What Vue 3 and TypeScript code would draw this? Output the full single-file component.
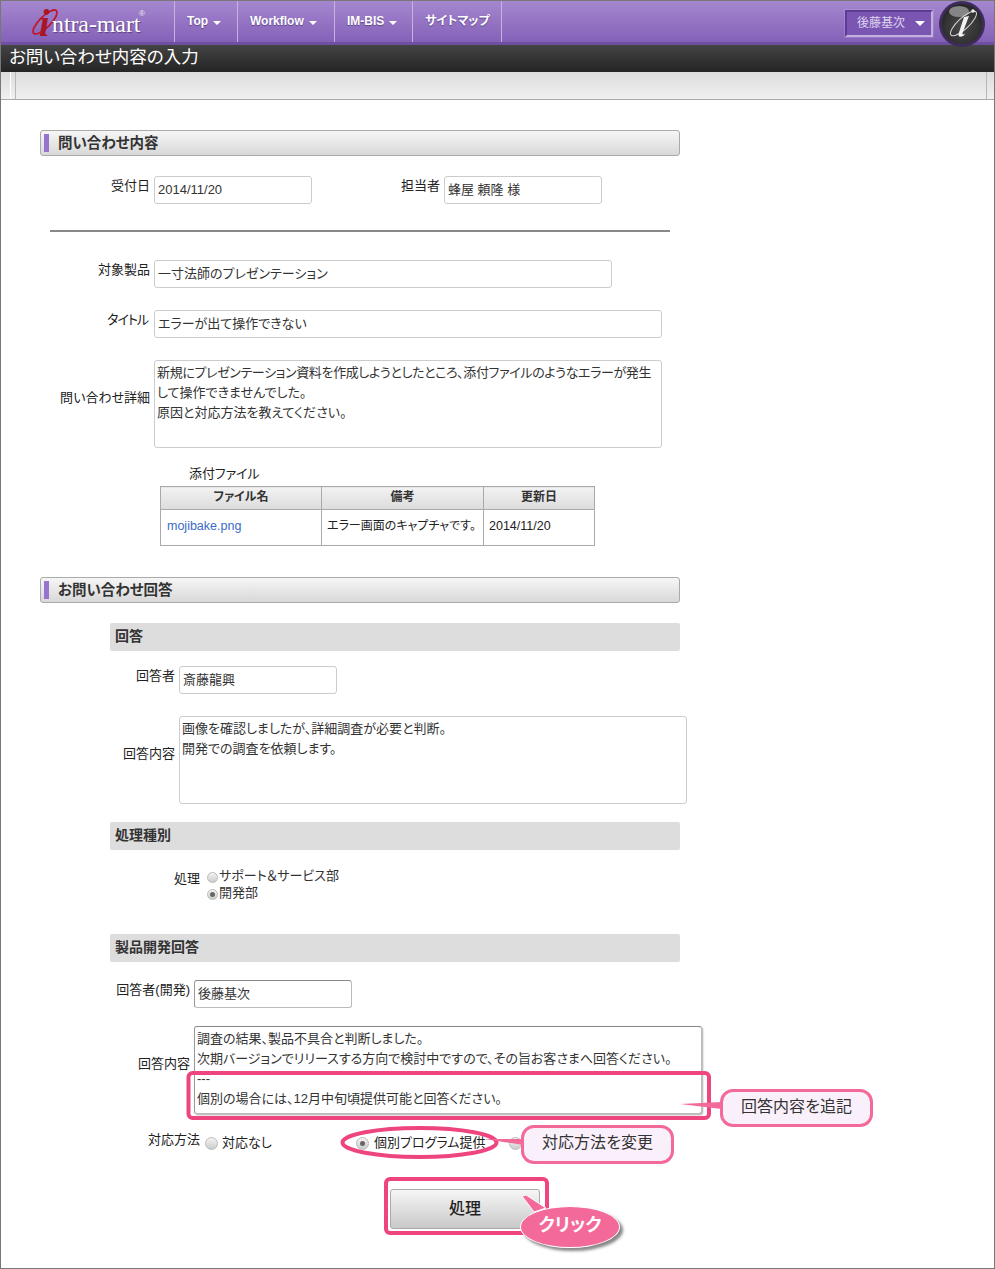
<template>
  <div class="page">
    <header class="topbar">
      <div class="logo">
        <svg class="logo-mark" width="34" height="32" viewBox="0 0 34 32">
          <ellipse cx="16" cy="16" rx="5.5" ry="16" transform="rotate(45 16 16)" fill="none" stroke="#c2182b" stroke-width="1.8" />
        </svg>
        <span class="logo-i">i</span><span class="logo-text">ntra-mart</span><sup class="logo-r">®</sup>
      </div>
      <nav class="menu">
        <a v-for="item in menu" :key="item.label" class="menu-item" :style="{ width: item.width + 'px' }">
          {{ item.label }}<i v-if="item.caret" class="caret"></i>
        </a>
      </nav>
      <div class="user-box">後藤基次<i class="user-caret"></i></div>
      <div class="info-ball">
        <svg width="46" height="46" viewBox="0 0 46 46">
          <defs>
            <radialGradient id="ballFill" cx="50%" cy="55%" r="60%">
              <stop offset="0" stop-color="#4a4a4a" />
              <stop offset="0.7" stop-color="#333" />
              <stop offset="1" stop-color="#1e1e1e" />
            </radialGradient>
          </defs>
          <circle cx="23" cy="23" r="23" fill="#3d2b58" />
          <circle cx="23" cy="23" r="20" fill="url(#ballFill)" />
          <ellipse cx="20" cy="10.5" rx="10" ry="5.5" fill="#858585" />
          <ellipse cx="24.5" cy="22.5" rx="5.5" ry="17" transform="rotate(47 24.5 22.5)" fill="none" stroke="#d8d8d8" stroke-width="1" />
          <path d="M25 16 L30 15 L23.5 32 Q23 34.5 26 32.5 L25 34.5 Q19 37.5 19.5 33 Z" fill="#f2f2f2" />
          <circle cx="34" cy="10" r="1.8" fill="#eee" />
        </svg>
      </div>
    </header>
    <div class="titlebar">お問い合わせ内容の入力</div>
    <div class="toolbar"><i class="tool-line"></i></div>

    <h2 class="section first">問い合わせ内容</h2>

    <div class="row r-176 with-a">
      <label class="label a">受付日</label>
      <div class="field w158">2014/11/20</div>
      <label class="label second">担当者</label>
      <div class="field w158">蜂屋 頼隆 様</div>
    </div>
    <hr class="divider" />
    <div class="row r-260">
      <label class="label a">対象製品</label>
      <div class="field w458">一寸法師のプレゼンテーション</div>
    </div>
    <div class="row r-310">
      <label class="label a narrow">タイトル</label>
      <div class="field w508">エラーが出て操作できない</div>
    </div>
    <div class="row r-310">
      <label class="label a mid">問い合わせ詳細</label>
      <div class="field area w508"><span class="tight">新規にプレゼンテーション資料を作成しようとしたところ、添付ファイルのようなエラーが発生</span><br />して操作できませんでした。<br />原因と対応方法を教えてください。</div>
    </div>

    <div class="attach-label">添付ファイル</div>
    <table class="files">
      <thead>
        <tr>
          <th class="c1">ファイル名</th>
          <th class="c2">備考</th>
          <th class="c3">更新日</th>
        </tr>
      </thead>
      <tbody>
        <tr>
          <td><a class="file-link">mojibake.png</a></td>
          <td>エラー画面のキャプチャです。</td>
          <td class="latin">2014/11/20</td>
        </tr>
      </tbody>
    </table>

    <h2 class="section s2">お問い合わせ回答</h2>

    <h3 class="sub s-623">回答</h3>
    <div class="row r-666">
      <label class="label b">回答者</label>
      <div class="field w158">斎藤龍興</div>
    </div>
    <div class="row r-716">
      <label class="label b mid">回答内容</label>
      <div class="field area w508">画像を確認しましたが、詳細調査が必要と判断。<br />開発での調査を依頼します。</div>
    </div>

    <h3 class="sub s-822">処理種別</h3>
    <div class="row r-867">
      <label class="label c proc">処理</label>
      <div class="radio-stack">
        <div class="radio-line"><i class="radio"></i>サポート＆サービス部</div>
        <div class="radio-line"><i class="radio on"></i>開発部</div>
      </div>
    </div>

    <h3 class="sub s-934">製品開発回答</h3>
    <div class="row r-980">
      <label class="label d">回答者(開発)</label>
      <div class="field w158 dark">後藤基次</div>
    </div>
    <div class="row r-1026">
      <label class="label d mid">回答内容</label>
      <div class="field area w508 dark shadow">調査の結果、製品不具合と判断しました。<br />次期バージョンでリリースする方向で検討中ですので、その旨お客さまへ回答ください。<br />---<br />個別の場合には、12月中旬頃提供可能と回答ください。</div>
    </div>
    <div class="row r-1131">
      <label class="label c">対応方法</label>
      <div class="choice c-none"><i class="radio big"></i>対応なし</div>
      <div class="choice c-own"><i class="radio big on"></i>個別プログラム提供</div>
      <div class="choice"><i class="radio big"></i></div>
    </div>
    <div class="actions"><button class="submit">処理</button></div>

    <!-- 注釈レイヤー -->
    <svg class="notes" width="995" height="1269" viewBox="0 0 995 1269">
      <rect x="188.5" y="1073" width="520.5" height="45" rx="4" fill="none" stroke="#ee4580" stroke-width="4" />
      <ellipse cx="419.5" cy="1142.5" rx="77" ry="14.5" fill="none" stroke="#ee4580" stroke-width="4" />
      <rect x="386" y="1179" width="161" height="54" rx="4" fill="none" stroke="#ee4580" stroke-width="4" />
      <path d="M680 1104 L722 1102 L722 1109 Z" fill="#f2699a" />
      <path d="M484 1139 L524 1139 L524 1145 Z" fill="#f2699a" />
      <path d="M522 1196 L526 1195 L546 1208 L534 1212 Z" fill="#f2699a" stroke="#fff" stroke-width="1" />
    </svg>
    <div class="callout call-a">回答内容を追記</div>
    <div class="callout call-b">対応方法を変更</div>
    <div class="bubble">クリック</div>
  </div>
</template>

<script setup lang="ts">
interface MenuItem {
  label: string
  width: number
  caret: boolean
}

const menu: MenuItem[] = [
  { label: 'Top', width: 63, caret: true },
  { label: 'Workflow', width: 97, caret: true },
  { label: 'IM-BIS', width: 78, caret: true },
  { label: 'サイトマップ', width: 89, caret: false },
]
</script>

<style>
html,
body {
  margin: 0;
  background: #fff;
}
</style>

<style scoped>
.page {
  position: relative;
  width: 995px;
  height: 1269px;
  box-sizing: border-box;
  border: 1px solid #777;
  overflow: hidden;
  background: #fff;
  color: #222;
  font-family: "Liberation Sans", "Noto Sans CJK JP", sans-serif;
  font-size: 13px;
  line-height: 20px;
  font-feature-settings: "palt";
}

.topbar {
  position: relative;
  display: flex;
  height: 44px;
  box-sizing: border-box;
  border-bottom: 3px solid #6f4fa0;
  background: linear-gradient(#a587cf, #8461b8);
}

.logo {
  position: relative;
  width: 173px;
  height: 41px;
  flex: none;
}

.logo-mark {
  position: absolute;
  left: 28px;
  top: 5px;
}

.logo-i {
  position: absolute;
  left: 38px;
  top: 0;
  color: #a81624;
  font-family: "Liberation Serif", serif;
  font-size: 38px;
  font-style: italic;
  font-weight: 700;
  line-height: 44px;
}

.logo-text {
  position: absolute;
  left: 51px;
  top: 10px;
  color: #fff;
  font-family: "Liberation Serif", serif;
  font-size: 24px;
  line-height: 26px;
  letter-spacing: -0.1px;
  text-shadow: 1px 1px 1px #5c4386;
  font-feature-settings: normal;
}

.logo-r {
  position: absolute;
  left: 138px;
  top: 8px;
  color: #eee;
  font-size: 8px;
  line-height: 10px;
}

.menu {
  display: flex;
  height: 41px;
  border-left: 1px solid #c5b3df;
}

.menu-item {
  display: block;
  box-sizing: border-box;
  padding-left: 12px;
  border-right: 1px solid #c5b3df;
  color: #fff;
  font-size: 12px;
  font-weight: 700;
  line-height: 40px;
  text-shadow: 0 1px 1px #5c4386;
}

.caret {
  display: inline-block;
  margin-left: 5px;
  vertical-align: 0;
  border-left: 4px solid transparent;
  border-right: 4px solid transparent;
  border-top: 4px solid #fff;
}

.user-box {
  position: absolute;
  left: 844px;
  top: 9px;
  width: 88px;
  height: 27px;
  box-sizing: border-box;
  padding-left: 10px;
  border: 2px solid #5c3c94;
  border-right-color: #c2afdd;
  border-bottom-color: #c2afdd;
  outline: 1px solid rgba(255, 255, 255, 0.12);
  background: #7a56b2;
  color: #ddd3ee;
  font-size: 12px;
  line-height: 23px;
}

.user-caret {
  position: absolute;
  right: 6px;
  top: 9px;
  border-left: 5px solid transparent;
  border-right: 5px solid transparent;
  border-top: 5px solid #fff;
}

.info-ball {
  position: absolute;
  left: 938px;
  top: 0;
  width: 46px;
  height: 46px;
  z-index: 2;
}

.titlebar {
  height: 27px;
  padding-left: 8px;
  background: linear-gradient(#444, #242424);
  color: #fff;
  font-size: 17.5px;
  line-height: 25px;
}

.toolbar {
  position: relative;
  height: 27px;
  border-bottom: 1px solid #aaa;
  background: linear-gradient(#dcdcdc, #f0f0f0);
}

.tool-line {
  position: absolute;
  left: 9px;
  top: 0;
  bottom: 0;
  width: 4px;
  border-left: 1px solid #fff;
  border-right: 1px solid #b8b8b8;
}

.toolbar::after {
  content: "";
  position: absolute;
  left: 985px;
  top: 0;
  bottom: 0;
  border-left: 1px solid #b8b8b8;
}

.section {
  position: relative;
  width: 640px;
  height: 26px;
  box-sizing: border-box;
  margin: 0 0 0 39px;
  padding-left: 17px;
  border: 1px solid #aaa;
  border-radius: 3px;
  background: linear-gradient(#f6f6f6, #d8d8d8);
  color: #333;
  font-size: 14.5px;
  font-weight: 700;
  line-height: 24px;
}

.section::before {
  content: "";
  position: absolute;
  left: 3px;
  top: 3px;
  bottom: 3px;
  width: 5px;
  background: #9673cc;
}

.section.first {
  margin-top: 30px;
}

.section.s2 {
  margin-top: 31px;
}

.row {
  display: flex;
  align-items: flex-start;
}

.r-176 { margin-top: 20px; }
.r-260 { margin-top: 28px; }
.r-310 { margin-top: 22px; }
.r-666 { margin-top: 15px; }
.r-716 { margin-top: 22px; }
.r-867 { margin-top: 16px; }
.r-980 { margin-top: 18px; }
.r-1026 { margin-top: 18px; }
.r-1131 { margin-top: 16px; }

.label {
  flex: none;
  margin-right: 4px;
  text-align: right;
  color: #222;
}

.label.a { width: 149px; }
.label.b { width: 174px; }
.label.c { width: 199px; }
.label.d { width: 189px; }

.label.second {
  width: 128px;
}

.label.narrow {
  width: 147px;
  margin-right: 6px;
  letter-spacing: -1px;
}

.label.mid {
  align-self: center;
  padding-bottom: 12px;
}

.label.proc {
  margin-top: 3px;
}

.field {
  flex: none;
  box-sizing: border-box;
  height: 28px;
  padding: 3px 3px 0;
  border: 1px solid #ccc;
  border-radius: 3px;
  background: #fff;
  color: #333;
  white-space: nowrap;
}

.field.dark {
  border-color: #888 #bbb #bbb #999;
}

.field.shadow {
  box-shadow: 1px 1px 2px #aaa;
}

.area {
  height: 88px;
  padding: 2px 2px 0;
}

.tight {
  letter-spacing: -0.37px;
}

.w158 { width: 158px; }
.w458 { width: 458px; }
.w508 { width: 508px; }

.divider {
  width: 620px;
  height: 2px;
  margin: 26px 0 0 49px;
  border: 0;
  background: #888;
}

.attach-label {
  margin: 16px 0 0 188px;
  letter-spacing: -0.1px;
}

.files {
  width: 434px;
  margin: 2px 0 0 159px;
  border-collapse: collapse;
  table-layout: fixed;
}

.files th,
.files td {
  box-sizing: border-box;
  border: 1px solid #aaa;
}

.files th {
  height: 23px;
  padding: 0 0 2px;
  background: linear-gradient(#f2f2f2, #dcdcdc);
  color: #333;
  font-size: 12px;
  font-weight: 700;
}

.files td {
  height: 36px;
  padding: 0 5px 4px;
  font-size: 12px;
  white-space: nowrap;
}

.files td:first-child {
  padding-left: 6px;
}

.files td.latin,
.file-link {
  font-size: 12.5px;
}

.c1 { width: 161px; }
.c2 { width: 162px; }
.c3 { width: 111px; }

.file-link {
  color: #3a6bc8;
}

.sub {
  width: 570px;
  height: 28px;
  box-sizing: border-box;
  margin: 0 0 0 109px;
  padding-left: 5px;
  border-radius: 2px;
  background: #ddd;
  color: #333;
  font-size: 14px;
  font-weight: 700;
  line-height: 26px;
}

.s-623 { margin-top: 20px; }
.s-822 { margin-top: 18px; }
.s-934 { margin-top: 34px; }

.radio-stack {
  display: flex;
  flex-direction: column;
  margin-left: 3px;
}

.radio-line {
  display: flex;
  align-items: center;
  height: 17px;
  padding-top: 1px;
  margin-bottom: -1px;
  color: #333;
  white-space: nowrap;
}

.radio {
  position: relative;
  flex: none;
  width: 9px;
  height: 9px;
  margin: 4px 1px 0 0;
  border: 1px solid #bbb;
  border-radius: 50%;
  background: linear-gradient(#f4f4f4, #ccc);
}

.radio.on::after {
  content: "";
  position: absolute;
  left: 2px;
  top: 2px;
  width: 5px;
  height: 5px;
  border-radius: 50%;
  background: #666;
}

.radio.big {
  width: 11px;
  height: 11px;
  margin: 0 4px 0 0;
}

.radio.big.on::after {
  left: 3px;
  top: 3px;
}

.choice {
  display: flex;
  align-items: center;
  height: 24px;
  margin-top: 1px;
  color: #222;
  white-space: nowrap;
}

.c-none {
  width: 151px;
  margin-left: 1px;
}

.c-own {
  width: 153px;
}

.c-own .radio.big {
  margin-right: 5px;
}

.actions {
  margin: 34px 0 0 389px;
}

.submit {
  display: block;
  width: 150px;
  height: 40px;
  padding: 0;
  border: 1px solid #aaa;
  border-radius: 3px;
  background: linear-gradient(#f6f6f6, #c9c9c9);
  color: #222;
  font: inherit;
  font-size: 16px;
  font-weight: 500;
}

.notes {
  position: absolute;
  left: -1px;
  top: -1px;
  pointer-events: none;
}

.callout {
  position: absolute;
  display: flex;
  align-items: center;
  justify-content: center;
  box-sizing: border-box;
  padding-bottom: 3px;
  border: 3px solid #f2699a;
  border-radius: 13px;
  background: #faf0fb;
  color: #333;
  font-size: 16px;
}

.call-a {
  left: 719px;
  top: 1088px;
  width: 153px;
  height: 38px;
}

.call-b {
  left: 520px;
  top: 1124px;
  width: 153px;
  height: 39px;
}

.bubble {
  position: absolute;
  left: 519px;
  top: 1205px;
  width: 100px;
  height: 42px;
  box-sizing: border-box;
  border: 1px solid #fff;
  border-radius: 50%;
  background: #f2699a;
  box-shadow: 3px 3px 3px #888;
  color: #fff;
  font-size: 18px;
  font-weight: 700;
  line-height: 36px;
  text-align: center;
}
</style>
